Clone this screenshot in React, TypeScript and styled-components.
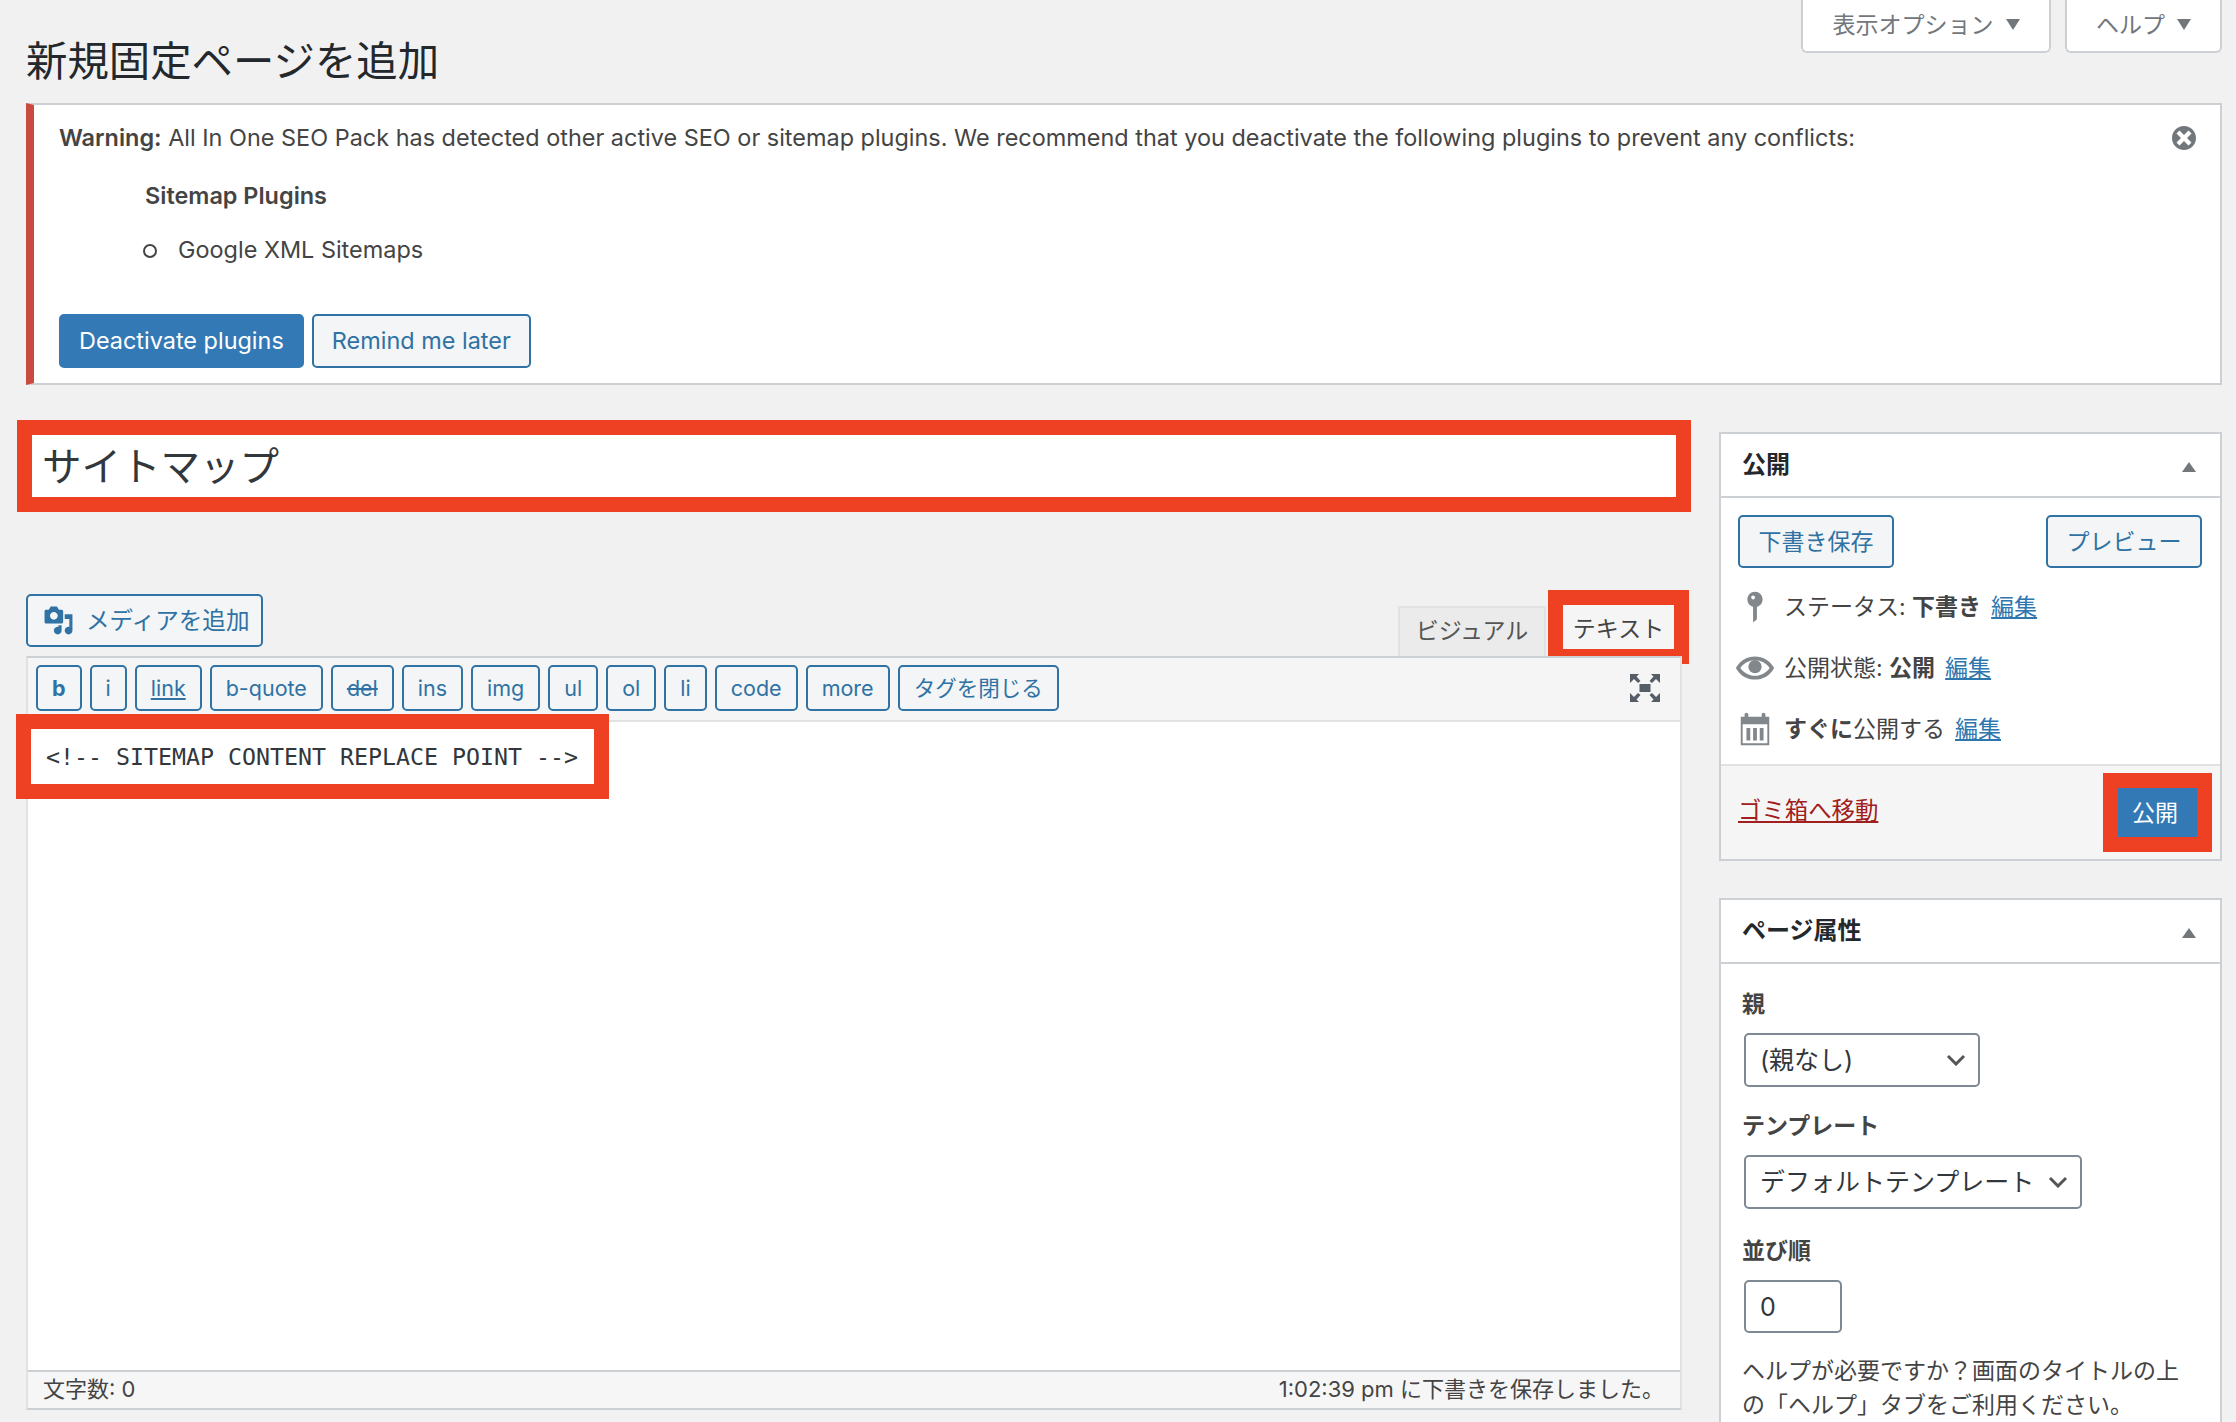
import React from "react";
import styled, { createGlobalStyle } from "styled-components";

const Global = createGlobalStyle`
    html, body {
        margin: 0;
        padding: 0;
        background: #f1f1f1;
    }
    * {
        box-sizing: border-box;
    }
`;

const Page = styled.div`
    width: 2236px;
    height: 1422px;
    overflow: hidden;
    background: #f1f1f1;
    color: #444;
    font-family: Inter, "Noto Sans CJK JP", sans-serif;
    font-size: 23px;
    line-height: 34px;
`;

const HeaderRow = styled.div`
    display: flex;
    justify-content: space-between;
    height: 103px;
    padding: 0 14px 0 26px;
`;

const Heading = styled.h1`
    margin: 0;
    padding-top: 36px;
    font-size: 41.4px;
    line-height: 50px;
    font-weight: 400;
    color: #23282d;
`;

const MetaLinks = styled.div`
    display: flex;
    gap: 14px;
    height: 53px;
`;

const MetaTab = styled.div<{ $width: number }>`
    display: flex;
    align-items: center;
    justify-content: center;
    gap: 12px;
    width: ${(props) => props.$width}px;
    height: 53px;
    padding-bottom: 2px;
    background: #fff;
    border: 2px solid #ccd0d4;
    border-top: none;
    border-radius: 0 0 6px 6px;
    color: #72777c;
`;

const Triangle = styled.span<{ $up?: boolean }>`
    display: block;
    width: 0;
    height: 0;
    border-left: 7px solid transparent;
    border-right: 7px solid transparent;
    ${(props) =>
        props.$up
            ? "border-bottom: 10px solid #72777c; margin-top: 4px;"
            : "border-top: 11px solid #72777c;"}
`;

const Notice = styled.div`
    position: relative;
    height: 282px;
    margin: 0 14px 0 26px;
    padding: 16px 0 0 25px;
    background: #fff;
    border: 2px solid #ccd0d4;
    border-left: 8px solid #ca4a3f;
    font-size: 23.45px;
`;

const NoticeLine = styled.p`
    margin: 0;

    b {
        font-weight: 600;
    }
`;

const NoticeSubhead = styled.p`
    margin: 24px 0 0 86px;
    font-weight: 600;
`;

const NoticeList = styled.ul`
    margin: 20px 0 0;
    padding-left: 84px;
    list-style: none;

    li {
        display: flex;
        align-items: center;
        gap: 21px;
    }

    li::before {
        content: "";
        width: 10px;
        height: 10px;
        margin-top: 2px;
        border: 2px solid #444;
        border-radius: 50%;
    }
`;

const NoticeButtons = styled.div`
    display: flex;
    gap: 8px;
    margin-top: 47px;
`;

const Button = styled.div<{ $primary?: boolean }>`
    display: flex;
    align-items: center;
    height: 54px;
    padding: 0 18px;
    border: 2px solid #2f72a3;
    border-radius: 5px;
    background: ${(props) => (props.$primary ? "#3379b5" : "#f3f5f6")};
    color: ${(props) => (props.$primary ? "#fff" : "#2f72a3")};
    white-space: nowrap;
    ${(props) => props.$primary && "border-color: #3379b5;"}
`;

const CloseIcon = styled.svg`
    position: absolute;
    top: 18px;
    right: 21px;
    width: 30px;
    height: 30px;
    fill: #72777c;
`;

const Columns = styled.div`
    display: grid;
    grid-template-columns: 1656px 503px;
    column-gap: 37px;
    margin-top: 35px;
    padding-left: 26px;
`;

const MainColumn = styled.div`
    min-width: 0;
`;

const TitleFrame = styled.div`
    height: 92px;
    margin: 0 -9px;
    padding-left: 10px;
    background: #fff;
    border: 15px solid #ee4023;
    color: #32373c;
    font-size: 39.5px;
    line-height: 64px;
`;

const EditorTools = styled.div`
    display: flex;
    justify-content: space-between;
    align-items: flex-start;
    height: 144px;
    padding-top: 82px;
`;

const MediaButton = styled(Button)`
    gap: 12px;
    width: 237px;
    height: 53px;
    padding: 0 0 0 15px;
    font-size: 23.6px;
`;

const MediaIcon = styled.svg`
    width: 31px;
    height: 31px;
    fill: #2f72a3;
`;

const Tabs = styled.div`
    position: relative;
    align-self: flex-end;
    display: flex;
`;

const VisualTab = styled.div`
    display: flex;
    align-items: center;
    justify-content: center;
    width: 148px;
    height: 50px;
    margin-right: 136px;
    padding-bottom: 2px;
    background: #ebebeb;
    border: 2px solid #e2e2e2;
    border-bottom: none;
    color: #555;
`;

const TextTabFrame = styled.div`
    position: absolute;
    top: -16px;
    right: -7px;
    width: 141px;
    height: 74px;
    display: flex;
    align-items: center;
    justify-content: center;
    padding-top: 4px;
    background: #f5f5f5;
    border: 15px solid #ee4023;
    color: #444;
`;

const Editor = styled.div`
    position: relative;
    height: 754px;
    display: flex;
    flex-direction: column;
    border: 2px solid #e2e2e2;
    border-top: 2px solid #ccd0d4;
    border-bottom: 2px solid #ccd0d4;
    background: #fff;
`;

const Toolbar = styled.div`
    display: flex;
    align-items: center;
    gap: 8px;
    height: 64px;
    padding: 0 0 2px 8px;
    background: #f5f5f5;
    border-bottom: 2px solid #e2e2e2;
`;

const ToolButton = styled.div<{ $bold?: boolean; $under?: boolean; $strike?: boolean }>`
    height: 46px;
    padding: 0 14px;
    background: #f3f5f6;
    border: 2px solid #2f72a3;
    border-radius: 5px;
    color: #2f72a3;
    font-size: 21.5px;
    line-height: 42px;
    white-space: nowrap;
    font-weight: ${(props) => (props.$bold ? 700 : 400)};
    text-decoration: ${(props) =>
        props.$under ? "underline" : props.$strike ? "line-through" : "none"};
`;

const FullscreenIcon = styled.svg`
    width: 30px;
    height: 28px;
    margin-left: auto;
    margin-right: 20px;
    fill: #555d66;
`;

const EditorBody = styled.div`
    position: relative;
    flex: 1;
`;

const CodeFrame = styled.div`
    position: absolute;
    top: -8px;
    left: -12px;
    height: 85px;
    padding: 0 16px 0 15px;
    background: #fff;
    border: 15px solid #ee4023;
    color: #32373c;
    font-family: "DejaVu Sans Mono", monospace;
    font-size: 23.25px;
    line-height: 56px;
    white-space: pre;
`;

const StatusBar = styled.div`
    display: flex;
    justify-content: space-between;
    align-items: center;
    height: 38px;
    padding: 0 16px 2px 15px;
    background: #f6f6f6;
    border-top: 2px solid #ccd0d4;
    font-size: 22px;
`;

const SideColumn = styled.div`
    margin-top: 12px;
`;

const Box = styled.div`
    margin-bottom: 37px;
    background: #fff;
    border: 2px solid #ccd0d4;
`;

const BoxHeader = styled.div`
    display: flex;
    align-items: center;
    justify-content: space-between;
    height: 64px;
    padding: 0 24px 0 21px;
    border-bottom: 2px solid #ccd0d4;
    color: #23282d;
    font-size: 24px;
    font-weight: 700;
`;

const PublishBody = styled.div`
    padding: 17px 18px 5px 17px;
`;

const ActionRow = styled.div`
    display: flex;
    justify-content: space-between;
    margin-bottom: 8px;
`;

const SaveButton = styled(Button)`
    justify-content: center;
    width: 156px;
    height: 53px;
    padding: 0;
`;

const StatusRow = styled.div`
    display: flex;
    align-items: center;
    height: 61px;
`;

const StatusIcon = styled.svg`
    flex: none;
    width: 38px;
    height: 38px;
    margin: 0 10px 0 -2px;
    fill: #82878c;
`;

const Link = styled.a`
    margin-left: 10px;
    color: #2e76ae;
    text-decoration: underline;
`;

const PublishFooter = styled.div`
    display: flex;
    align-items: center;
    justify-content: space-between;
    height: 95px;
    padding: 0 8px 0 17px;
    background: #f5f5f5;
    border-top: 2px solid #e2e2e2;
`;

const TrashLink = styled.a`
    margin-bottom: 4px;
    color: #a02020;
    font-size: 23.4px;
    text-decoration: underline;
`;

const PublishButton = styled.div`
    display: flex;
    align-items: center;
    justify-content: center;
    width: 109px;
    height: 79px;
    padding-right: 5px;
    background: #3379b5;
    border: 15px solid #ee4023;
    color: #fff;
`;

const AttributesBody = styled.div`
    padding: 23px 20px 40px 21px;
`;

const FieldLabel = styled.div<{ $gap?: number }>`
    margin-top: ${(props) => props.$gap ?? 0}px;
    font-weight: 700;
`;

const SelectBox = styled.div<{ $width: number }>`
    display: flex;
    align-items: center;
    justify-content: space-between;
    width: ${(props) => props.$width}px;
    height: 54px;
    margin: 12px 0 0 2px;
    padding: 0 12px 0 14px;
    background: #fff;
    border: 2px solid #7e8993;
    border-radius: 5px;
    color: #32373c;
    font-size: 25px;
`;

const Chevron = styled.svg`
    width: 20px;
    height: 12px;
    fill: none;
    stroke: #555;
    stroke-width: 3;
`;

const NumberBox = styled(SelectBox)`
    height: 53px;
`;

const HelpText = styled.p`
    margin: 22px 0 0;
    line-height: 33.5px;
`;

export default function App() {
    const tools: [string, { $bold?: boolean; $under?: boolean; $strike?: boolean }][] = [
        ["b", { $bold: true }],
        ["i", {}],
        ["link", { $under: true }],
        ["b-quote", {}],
        ["del", { $strike: true }],
        ["ins", {}],
        ["img", {}],
        ["ul", {}],
        ["ol", {}],
        ["li", {}],
        ["code", {}],
        ["more", {}],
        ["タグを閉じる", {}],
    ];

    return (
        <Page>
            <Global />
            <HeaderRow>
                <Heading>新規固定ページを追加</Heading>
                <MetaLinks>
                    <MetaTab $width={250}>
                        表示オプション <Triangle />
                    </MetaTab>
                    <MetaTab $width={157}>
                        ヘルプ <Triangle />
                    </MetaTab>
                </MetaLinks>
            </HeaderRow>

            <Notice>
                <NoticeLine>
                    <b>Warning:</b> All In One SEO Pack has detected other active SEO or sitemap
                    plugins. We recommend that you deactivate the following plugins to prevent any
                    conflicts:
                </NoticeLine>
                <NoticeSubhead>Sitemap Plugins</NoticeSubhead>
                <NoticeList>
                    <li>Google XML Sitemaps</li>
                </NoticeList>
                <NoticeButtons>
                    <Button $primary>Deactivate plugins</Button>
                    <Button>Remind me later</Button>
                </NoticeButtons>
                <CloseIcon viewBox="0 0 20 20">
                    <path d="M10 2c4.42 0 8 3.58 8 8s-3.58 8-8 8-8-3.58-8-8 3.58-8 8-8zm5 11l-3-3 3-3-2-2-3 3-3-3-2 2 3 3-3 3 2 2 3-3 3 3z" />
                </CloseIcon>
            </Notice>

            <Columns>
                <MainColumn>
                    <TitleFrame>サイトマップ</TitleFrame>
                    <EditorTools>
                        <MediaButton>
                            <MediaIcon viewBox="0 0 20 20">
                                <path d="M13 11V4c0-.55-.45-1-1-1h-1.67L9 1H5L3.67 3H2c-.55 0-1 .45-1 1v7c0 .55.45 1 1 1h10c.55 0 1-.45 1-1zM7 4.5c1.38 0 2.5 1.12 2.5 2.5S8.38 9.5 7 9.5 4.5 8.38 4.5 7 5.62 4.5 7 4.5zM14 6h5v10.5c0 1.38-1.12 2.5-2.5 2.5S14 17.88 14 16.5s1.12-2.5 2.5-2.5c.17 0 .34.02.5.05V9h-3V6zm-4 8.05V13h2v3.5c0 1.38-1.12 2.5-2.5 2.5S7 17.88 7 16.5 8.12 14 9.5 14c.17 0 .34.02.5.05z" />
                            </MediaIcon>
                            メディアを追加
                        </MediaButton>
                        <Tabs>
                            <VisualTab>ビジュアル</VisualTab>
                            <TextTabFrame>テキスト</TextTabFrame>
                        </Tabs>
                    </EditorTools>
                    <Editor>
                        <Toolbar>
                            {tools.map(([label, flags]) => (
                                <ToolButton key={label} {...flags}>
                                    {label}
                                </ToolButton>
                            ))}
                            <FullscreenIcon viewBox="0 0 30 28">
                                <rect x="9.500" y="10" width="11" height="8" />
                                <path d="M0 0h9L6.500 2.500 10.500 7 8 9 4 5 1.500 7.500 0 9z" />
                                <path d="M30 0h-9l2.500 2.500-4 4.500L22 9l4-4 2.500 2.500L30 9z" />
                                <path d="M0 28h9l-2.500-2.500 4-4.500L8 19l-4 4-2.500-2.500L0 19z" />
                                <path d="M30 28h-9l2.500-2.500-4-4.500L22 19l4 4 2.500-2.500L30 19z" />
                            </FullscreenIcon>
                        </Toolbar>
                        <EditorBody>
                            <CodeFrame>{"<!-- SITEMAP CONTENT REPLACE POINT -->"}</CodeFrame>
                        </EditorBody>
                        <StatusBar>
                            <span>文字数: 0</span>
                            <span>1:02:39 pm に下書きを保存しました。</span>
                        </StatusBar>
                    </Editor>
                </MainColumn>

                <SideColumn>
                    <Box>
                        <BoxHeader>
                            公開 <Triangle $up />
                        </BoxHeader>
                        <PublishBody>
                            <ActionRow>
                                <SaveButton>下書き保存</SaveButton>
                                <SaveButton>プレビュー</SaveButton>
                            </ActionRow>
                            <StatusRow>
                                <StatusIcon viewBox="0 0 20 20">
                                    <path d="M14 6c0 1.86-1.28 3.41-3 3.86V16c0 1-2 2-2 2V9.86c-1.72-.45-3-2-3-3.86 0-2.21 1.79-4 4-4s4 1.79 4 4zM8 5c0 .55.45 1 1 1s1-.45 1-1-.45-1-1-1-1 .45-1 1z" />
                                </StatusIcon>
                                <span>
                                    ステータス: <b>下書き</b>
                                </span>
                                <Link>編集</Link>
                            </StatusRow>
                            <StatusRow>
                                <StatusIcon viewBox="0 0 20 20">
                                    <path d="M10 3.900c-4 0-7.700 2.100-9.700 5.500L0 10l.3.600c2 3.400 5.700 5.500 9.700 5.500s7.700-2.100 9.700-5.500l.3-.6-.3-.6C17.700 6 14 3.900 10 3.900zm0 10.200c-3.100 0-6-1.600-7.700-4.100C4 7.500 6.900 5.900 10 5.900s6 1.600 7.700 4.100c-1.700 2.500-4.600 4.100-7.700 4.100z" />
                                    <circle cx="10" cy="9.300" r="3.500" />
                                </StatusIcon>
                                <span>
                                    公開状態: <b>公開</b>
                                </span>
                                <Link>編集</Link>
                            </StatusRow>
                            <StatusRow>
                                <StatusIcon viewBox="0 0 20 20">
                                    <path d="M2.500 3.500h2V2.400a1 1 0 0 1 2 0v1.100h7V2.400a1 1 0 0 1 2 0v1.100h2v15h-15zM3.500 7.500v10h13v-10zM5.500 9.500h2v6.500h-2zM9 9.500h2v6.500H9zM12.500 9.500h2v6.500h-2z" />
                                </StatusIcon>
                                <span>
                                    <b>すぐに</b>公開する
                                </span>
                                <Link>編集</Link>
                            </StatusRow>
                        </PublishBody>
                        <PublishFooter>
                            <TrashLink>ゴミ箱へ移動</TrashLink>
                            <PublishButton>公開</PublishButton>
                        </PublishFooter>
                    </Box>

                    <Box>
                        <BoxHeader>
                            ページ属性 <Triangle $up />
                        </BoxHeader>
                        <AttributesBody>
                            <FieldLabel>親</FieldLabel>
                            <SelectBox $width={236}>
                                (親なし)
                                <Chevron viewBox="0 0 20 12">
                                    <path d="M2 2l8 8 8-8" />
                                </Chevron>
                            </SelectBox>
                            <FieldLabel $gap={22}>テンプレート</FieldLabel>
                            <SelectBox $width={338}>
                                デフォルトテンプレート
                                <Chevron viewBox="0 0 20 12">
                                    <path d="M2 2l8 8 8-8" />
                                </Chevron>
                            </SelectBox>
                            <FieldLabel $gap={25}>並び順</FieldLabel>
                            <NumberBox $width={98}>0</NumberBox>
                            <HelpText>
                                ヘルプが必要ですか？画面のタイトルの上の「ヘルプ」タブをご利用ください。
                            </HelpText>
                        </AttributesBody>
                    </Box>
                </SideColumn>
            </Columns>
        </Page>
    );
}
